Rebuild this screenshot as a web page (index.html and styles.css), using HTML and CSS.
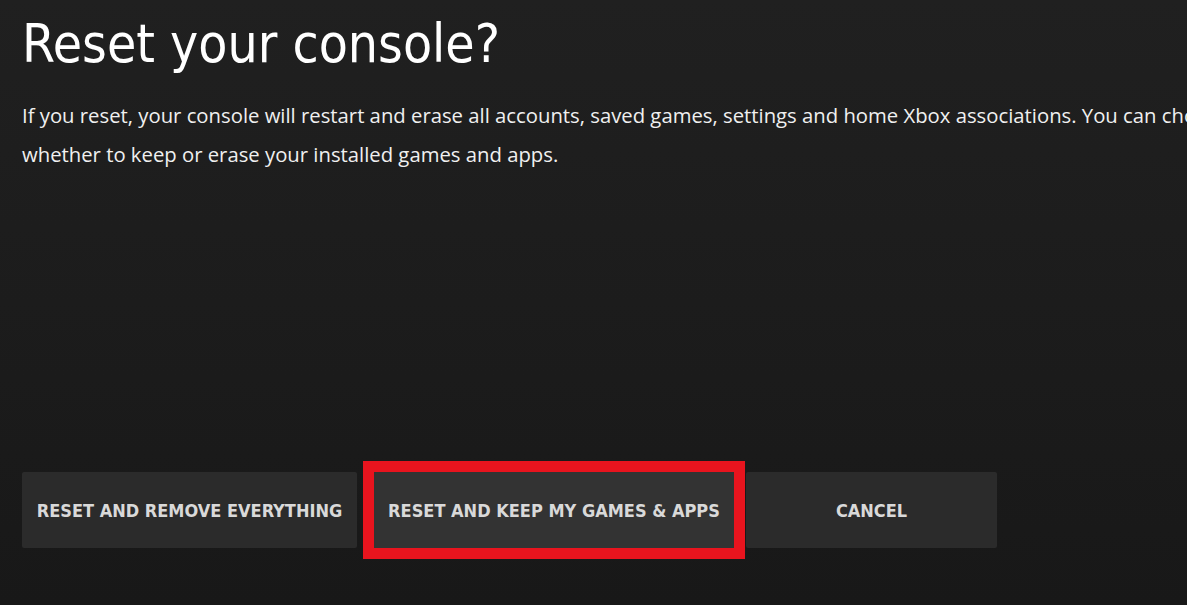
FILE: index.html
```html
<!DOCTYPE html>
<html lang="en">
  <head>
    <meta charset="UTF-8" />
    <meta name="viewport" content="width=device-width, initial-scale=1.0" />
    <title>Reset your console?</title>
    <link rel="stylesheet" href="styles.css">
  </head>
  <body>
    <div class="screen">
      <h1 class="title">Reset your console?</h1>
      <p class="desc">
        If you reset, your console will restart and erase all accounts, saved games, settings and home Xbox associations. You can choose
        whether to keep or erase your installed games and apps.
      </p>
      <div class="actions">
        <button class="btn btn-remove">RESET AND REMOVE EVERYTHING</button>
        <button class="btn btn-keep selected">RESET AND KEEP MY GAMES &amp; APPS</button>
        <button class="btn btn-cancel">CANCEL</button>
      </div>
    </div>
  </body>
</html>
```

FILE: styles.css
```css
html,
body {
  margin: 0;
  height: 100%;
  overflow: hidden;
}

body {
  background: linear-gradient(#202020, #181818);
  color: #fff;
}

.screen {
  display: flex;
  flex-direction: column;
  height: 100%;
  padding: 0 0 0 22px;
  box-sizing: border-box;
}

.title {
  margin: 14px 0 0;
  font-family: "DejaVu Sans", sans-serif;
  font-stretch: condensed;
  font-weight: normal;
  font-size: 53px;
  line-height: 60px;
}

/* wider than the screen on purpose: the first line runs off the right edge */
.desc {
  width: 1240px;
  margin: 22px 0 0;
  font-family: "Open Sans", sans-serif;
  font-size: 20.3px;
  line-height: 39px;
  color: #f0f0f0;
}

.actions {
  display: flex;
  align-items: center;
  margin-top: auto;
  margin-bottom: 57px;
}

.btn {
  height: 76px;
  border: none;
  border-radius: 2px;
  background: #2b2b2b;
  color: #d9d9d9;
  font-family: "DejaVu Sans", sans-serif;
  font-stretch: condensed;
  font-weight: bold;
  font-size: 18px;
  padding: 0;
}

.btn-remove {
  width: 335px;
}

.btn-keep {
  width: 360px;
  margin-left: 17px;
  background: #333;
}

.btn-cancel {
  width: 251px;
  margin-left: 12px;
}

.selected {
  border-radius: 0;
  outline: 11px solid #e8141e;
  outline-offset: 0;
}
```
